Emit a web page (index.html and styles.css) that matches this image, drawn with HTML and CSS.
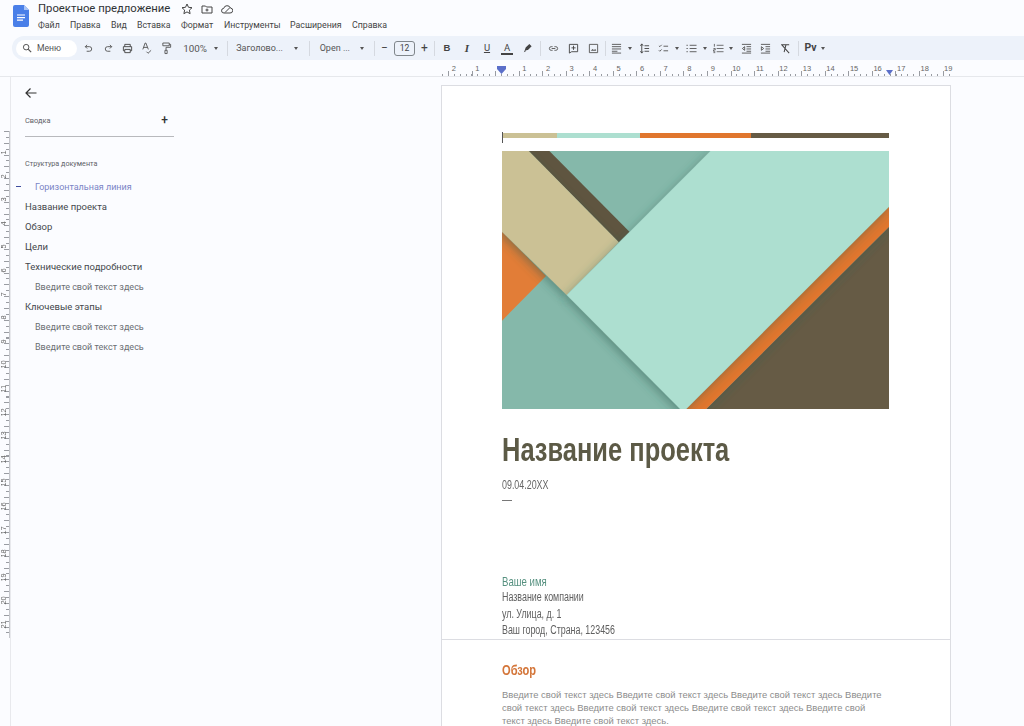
FILE: index.html
```html
<!DOCTYPE html>
<html lang="ru">
<head>
<meta charset="utf-8">
<title>Проектное предложение</title>
<link rel="stylesheet" href="styles.css">
</head>
<body>
<header class="head">
  <svg class="logo" viewBox="0 0 16 22"><path d="M2 0h9l5 5v15a2 2 0 0 1-2 2H2a2 2 0 0 1-2-2V2a2 2 0 0 1 2-2z" fill="#4a7fe8"/><path d="M11 0l5 5h-5z" fill="#a9c4f5"/><path d="M4 10h8M4 12.6h8M4 15.2h6" stroke="#fff" stroke-width="1.2"/></svg>
  <div class="head-text">
    <div class="title-row">
      <span class="doc-title">Проектное предложение</span>
      <svg class="hi" viewBox="0 0 12 12"><path d="M6 1l1.5 3.3 3.5.4-2.6 2.4.7 3.6L6 8.9l-3.1 1.8.7-3.6L1 4.7l3.5-.4z" fill="none" stroke="#444" stroke-width="1"/></svg>
      <svg class="hi" viewBox="0 0 12 12"><path d="M1 3h3.5l1 1H11v6H1z M6 5.5v3M4.5 7H7.500" fill="none" stroke="#444" stroke-width="1"/></svg>
      <svg class="hi" viewBox="0 0 12 12"><path d="M3 10a2.300 2.300 0 0 1-.3-4.600A3.500 3.500 0 0 1 9.400 5 2.500 2.500 0 0 1 9 10zM4 9.500l5-5" fill="none" stroke="#444" stroke-width="1"/></svg>
    </div>
    <nav class="menu">
      <span>Файл</span><span>Правка</span><span>Вид</span><span>Вставка</span><span>Формат</span><span>Инструменты</span><span>Расширения</span><span>Справка</span>
    </nav>
  </div>
</header>

<div class="toolbar">
  <div class="pill"><svg class="ic s11" viewBox="0 0 12 12"><circle cx="5" cy="5" r="3.300" fill="none" stroke="#555" stroke-width="1.200"/><path d="M7.500 7.500L11 11" stroke="#555" stroke-width="1.400"/></svg><span>Меню</span></div>
  <svg class="ic" viewBox="0 0 12 12"><path d="M2.500 4H7a2.500 2.500 0 0 1 0 5H4M2.500 4l2-2M2.500 4l2 2" fill="none" stroke="#555" stroke-width="1"/></svg>
  <svg class="ic" viewBox="0 0 12 12"><path d="M9.500 4H5a2.500 2.500 0 0 0 0 5h3M9.500 4l-2-2M9.500 4l-2 2" fill="none" stroke="#555" stroke-width="1"/></svg>
  <svg class="ic" viewBox="0 0 12 12"><path d="M3 4V1.500h6V4M3 8.500H1.500V4h9v4.500H9M3 7h6v3.500H3z" fill="none" stroke="#444" stroke-width="1"/></svg>
  <svg class="ic tall" viewBox="0 0 12 14"><path d="M2 8L4.500 1h.8L8 8M3 5.800h4M6 10.500l1.700 1.700L11 9" fill="none" stroke="#555" stroke-width="1"/></svg>
  <svg class="ic tall" viewBox="0 0 12 14"><path d="M2 1h7v3H2zM9 2.500h1.500v3.200H5.500V9M4.300 9h2.400v3.500H4.300z" fill="none" stroke="#555" stroke-width="1"/></svg>
  <span class="lbl big end">100%</span><i class="caret"></i><b class="sep end"></b>
  <span class="lbl end">Заголово...</span><i class="caret"></i><b class="sep"></b>
  <span class="lbl end">Open ...</span><i class="caret"></i><b class="sep"></b>
  <span class="tool-t">−</span><span class="size">12</span><span class="tool-t">+</span><b class="sep"></b>
  <span class="fmt bold">B</span><span class="fmt ital">I</span><span class="fmt und">U</span><span class="fmt col">A</span>
  <svg class="ic" viewBox="0 0 12 12"><path d="M3 8l1-3 4-4 2.500 2.500-4 4zM2 10l1-2 2 .500z" fill="#444"/></svg><b class="sep"></b>
  <svg class="ic" viewBox="0 0 12 12"><path d="M5 4H3.500a2 2 0 0 0 0 4H5M7 4h1.500a2 2 0 0 1 0 4H7M4 6h4" fill="none" stroke="#555" stroke-width="1"/></svg>
  <svg class="ic" viewBox="0 0 12 12"><path d="M1.500 1.500h9v8H4l-2.500 1.500zM6 3v4.500M3.800 5.300h4.500" fill="none" stroke="#444" stroke-width="1"/></svg>
  <svg class="ic" viewBox="0 0 12 12"><path d="M1.500 1.500h9v9h-9z" fill="none" stroke="#555" stroke-width="1"/><path d="M3 8.500l2-2 1.500 1.200L8 6.500l1 2z" fill="#555"/></svg><b class="sep"></b>
  <svg class="ic" viewBox="0 0 12 12"><path d="M1 1.500h10M1 4h10M1 6.500h10M1 9h6M1 11h10" stroke="#555" stroke-width="1"/></svg><i class="caret"></i>
  <svg class="ic" viewBox="0 0 12 12"><path d="M3 1v10M1.500 3L3 1l1.500 2M1.500 9L3 11l1.500-2M6 3h5M6 6h5M6 9h5" fill="none" stroke="#444" stroke-width="1"/></svg>
  <svg class="ic" viewBox="0 0 12 12"><path d="M1 3l1 1 2-2M1 8l1 1 2-2M6 3.500h5M6 8.500h5" fill="none" stroke="#555" stroke-width="1"/></svg><i class="caret"></i>
  <svg class="ic" viewBox="0 0 12 12"><path d="M4 2.500h7.500M4 6h7.500M4 9.500h7.500M.5 2.500h1.500M.5 6h1.500M.5 9.500h1.500" stroke="#555" stroke-width="1"/></svg><i class="caret"></i>
  <svg class="ic" viewBox="0 0 12 12"><path d="M4 2.500h7.500M4 6h7.500M4 9.500h7.500M1.500 1v3M.5 6h2v1.500h-2v1.500h2M.5 10.500h2" stroke="#555" stroke-width=".9" fill="none"/></svg><i class="caret"></i>
  <svg class="ic" viewBox="0 0 12 12"><path d="M1 1.500h10M6 4h5M6 6.500h5M6 9h5M1 11h10M4 4L1.500 6 4 8z" fill="none" stroke="#555" stroke-width="1"/></svg>
  <svg class="ic" viewBox="0 0 12 12"><path d="M1 1.500h10M6 4h5M6 6.500h5M6 9h5M1 11h10M1.500 4L4 6 1.500 8z" fill="none" stroke="#555" stroke-width="1"/></svg>
  <svg class="ic" viewBox="0 0 12 12"><path d="M2 2h8M6.500 2L4.500 10M1.500 1.500l8.500 9.500" fill="none" stroke="#444" stroke-width="1.100"/></svg><b class="sep"></b>
  <span class="fmt pv">Рv</span><i class="caret"></i>
</div>

<div class="hruler">
  <div class="hscale">
    <span>2</span><span>1</span><span></span><span>1</span><span>2</span><span>3</span><span>4</span><span>5</span><span>6</span><span>7</span><span>8</span><span>9</span><span>10</span><span>11</span><span>12</span><span>13</span><span>14</span><span>15</span><span>16</span><span>17</span><span>18</span><span>19</span>
    <svg class="tab tab-l" viewBox="0 0 9 8"><path d="M0 0h9v3L4.500 8 0 3z" fill="#5b6fc9"/></svg>
    <svg class="tab tab-r" viewBox="0 0 7 5"><path d="M0 0h7L3.500 5z" fill="#5b6fc9"/></svg>
  </div>
</div>

<main class="main">
  <div class="vruler">
    <div class="vscale">
      <span>1</span><span>2</span><span>3</span><span>4</span><span>5</span><span>6</span><span>7</span><span>8</span><span>9</span><span>10</span><span>11</span><span>12</span><span>13</span><span>14</span><span>15</span><span>16</span><span>17</span><span>18</span><span>19</span><span>20</span><span>21</span>
    </div>
  </div>

  <aside class="side">
    <svg class="back" viewBox="0 0 12 12"><path d="M11.500 6H1M5.500 1.500L1 6l4.500 4.500" fill="none" stroke="#333" stroke-width="1.200"/></svg>
    <div class="sum"><span>Сводка</span><em>+</em></div>
    <div class="struct">Структура документа</div>
    <ul class="outline">
      <li class="sub cur">Горизонтальная линия</li>
      <li>Название проекта</li>
      <li>Обзор</li>
      <li>Цели</li>
      <li>Технические подробности</li>
      <li class="sub">Введите свой текст здесь</li>
      <li>Ключевые этапы</li>
      <li class="sub">Введите свой текст здесь</li>
      <li class="sub">Введите свой текст здесь</li>
    </ul>
  </aside>

  <div class="doc">
    <section class="page first">
      <div class="bar"><i class="b1"></i><i class="b2"></i><i class="b3"></i><i class="b4"></i></div>
      <svg class="hero" viewBox="38 93 1160 774" preserveAspectRatio="none">
        <defs><filter id="sh" x="-20%" y="-20%" width="140%" height="140%"><feDropShadow dx="-6" dy="10" stdDeviation="14" flood-color="#2d5a50" flood-opacity=".45"/></filter></defs>
        <rect x="38" y="93" width="1160" height="774" fill="#85b8aa"/>
        <path d="M38 335L170 468 38 602z" fill="#e27d37"/>
        <path d="M118 93h62l240 242-32 32z" fill="#5f5540"/>
        <path d="M38 93h80l270 274-156 158L38 335z" fill="#cbc195" filter="url(#sh)"/>
        <path d="M1198 320V867H650z" fill="#665b45"/>
        <path d="M1198 260v60L650 867h-60z" fill="#e0762e" filter="url(#sh)"/>
        <path d="M663 93h535v167L590 867h-18L232 525z" fill="#addfd0" filter="url(#sh)"/>
      </svg>
      <h1 class="narrow wide">Название проекта</h1>
      <p class="date narrow">09.04.20XX</p>
      <div class="dash"></div>
      <p class="name narrow">Ваше имя</p>
      <p class="addr narrow">Название компании</p>
      <p class="addr narrow">ул. Улица, д. 1</p>
      <p class="addr narrow">Ваш город, Страна, 123456</p>
    </section>
    <section class="page second">
      <h2 class="narrow">Обзор</h2>
      <p class="body">Введите свой текст здесь Введите свой текст здесь Введите свой текст здесь Введите<br>свой текст здесь Введите свой текст здесь Введите свой текст здесь Введите свой<br>текст здесь Введите свой текст здесь.</p>
    </section>
  </div>
</main>
</body>
</html>
```

FILE: styles.css
```css
* { box-sizing: border-box; }
html, body { margin: 0; height: 726px; overflow: hidden; }
body { background: #fbfcff; font-family: Roboto, "Liberation Sans", sans-serif; color: #3c4043; }

.head { display: flex; height: 36px; padding: 4px 0 0 13px; gap: 9px; background: #fbfcff; }
.logo { width: 16px; height: 22px; margin-top: 1px; }
.head-text { display: flex; flex-direction: column; }
.title-row { display: flex; align-items: center; height: 10px; }
.doc-title { font-size: 11.300px; line-height: 10px; width: 143px; color: #303336; }
.hi { width: 12px; height: 12px; margin-right: 8px; }
.menu { display: flex; margin-top: 5px; font-size: 8.800px; line-height: 12px; color: #444; }
.menu span:nth-child(1) { width: 32px; }
.menu span:nth-child(2) { width: 41px; }
.menu span:nth-child(3) { width: 26px; }
.menu span:nth-child(4) { width: 44px; }
.menu span:nth-child(5) { width: 43px; }
.menu span:nth-child(6) { width: 66px; }
.menu span:nth-child(7) { width: 62px; }

.toolbar {
  display: grid; align-items: center; justify-items: center;
  grid-template-columns: 62px 20px 20px 19px 19px 20px 31px 18px 3px 55px 26px 1px 40px 24px 1px 19px 21px 19px 1px 24px 16px 24px 16px 25px 1px 24px 16px 24px 1px 20px 8px 20px 19px 8px 21px 6px 20px 6px 24px 14px 26px 1px 20px 8px;
  height: 24px; margin-left: 12px; padding-left: 4px;
  background: #edf2fa; border-radius: 12px 0 0 12px;
  font-size: 9px; color: #444;
}
.pill {
  justify-self: start; display: flex; align-items: center; gap: 5px;
  width: 61px; height: 17px; padding-left: 6px;
  background: #fff; border-radius: 9px; font-size: 8.600px; color: #555;
}
.ic { width: 11px; height: 11px; display: block; }
.tall { height: 13px; }
.s11 { width: 10px; height: 10px; }
.lbl { white-space: nowrap; font-size: 9px; color: #555; }
.big { font-size: 9.800px; }
.end { justify-self: end; }
.caret { width: 0; height: 0; border-left: 2.500px solid transparent; border-right: 2.500px solid transparent; border-top: 3px solid #555; }
.sep { width: 1px; height: 15px; background: #d5d9e0; }
.tool-t { font-size: 12px; color: #444; line-height: 12px; }
.size { width: 21px; height: 15px; border: 1px solid #80868b; border-radius: 3px; text-align: center; font-size: 8.600px; line-height: 13px; }
.fmt { font-size: 9.500px; color: #444; line-height: 12px; }
.bold { font-weight: 700; font-family: "Liberation Sans", sans-serif; }
.ital { font-style: italic; font-family: "Liberation Serif", serif; font-weight: 700; font-size: 11px; }
.und { text-decoration: underline; }
.col { border-bottom: 2px solid #444; padding: 0 3px; line-height: 11px; }
.pv { font-weight: 700; font-size: 10.500px; padding-left: 3px; }

.hruler { height: 16px; background: #fbfcff; padding-left: 442px; }
.hscale {
  position: relative; display: flex; height: 16px; width: 508px; padding-top: 4px;
  background:
    repeating-linear-gradient(90deg, #999ca2 0 1px, transparent 1px 23.550px) 6px bottom / 100% 5px no-repeat,
    repeating-linear-gradient(90deg, #999ca2 0 1px, transparent 1px 5.890px) left bottom / 100% 2px no-repeat;
  font-family: "Liberation Sans", sans-serif; font-size: 7.500px; line-height: 10px; color: #666;
}
.hscale span { width: 23.550px; flex: none; text-align: center; height: 10px; }
.tab { position: absolute; }
.tab-l { left: 55px; top: 6px; width: 9px; height: 8px; }
.tab-r { left: 444px; top: 10px; width: 7px; height: 5px; }

.main { display: flex; height: 650px; border-top: 1px solid #e6e8ec; }
.vruler { width: 11px; height: 649px; padding-top: 54px; border-right: 1px solid #e8e9ed; flex: none; }
.vscale {
  display: flex; flex-direction: column; height: 507px; padding-top: 10px;
  border-right: 1px solid #c5c7cc;
  background:
    repeating-linear-gradient(180deg, #999ca2 0 1px, transparent 1px 11.800px) right top / 5px 100% no-repeat,
    repeating-linear-gradient(180deg, #999ca2 0 1px, transparent 1px 5.900px) right top / 3px 100% no-repeat;
}
.vscale span {
  height: 23.600px; flex: none; text-align: center;
  writing-mode: vertical-rl; transform: rotate(180deg);
  font-family: "Liberation Sans", sans-serif; font-size: 7.500px; line-height: 7px; color: #666;
  width: 7px;
}

.side { width: 430px; flex: none; padding: 10px 0 0 14px; }
.back { display: block; width: 12px; height: 12px; }
.sum { display: flex; justify-content: space-between; align-items: center; width: 149px; height: 24px; margin-top: 14px; padding: 0 6px 9px 0; border-bottom: 1px solid #b8b9bd; font-size: 7.400px; color: #5f6368; }
.sum em { font-style: normal; font-size: 12px; color: #333; font-weight: 500; }
.struct { margin-top: 22px; font-size: 7.200px; line-height: 10px; color: #5f6368; }
.outline { list-style: none; margin: 8px 0 0; padding: 0; font-size: 9.500px; color: #44484c; }
.outline li { height: 19.950px; line-height: 20px; }
.outline .sub { padding-left: 10px; font-size: 9px; color: #6a6e73; }
.outline .cur { position: relative; color: #7a84c6; }
.outline .cur::before { content: ""; position: absolute; left: -9px; top: 9px; width: 5px; height: 1px; background: #3f4d9e; }

.doc { flex: none; width: 510px; padding-top: 8px; }
.page { background: #fff; border: 1px solid #dcdde2; padding-left: 60px; font-family: "Liberation Sans", sans-serif; }
.first { height: 555px; padding-top: 47px; }
.second { height: 86px; border-top: 0; border-bottom: 0; padding-top: 20px; overflow: hidden; }
.narrow { transform: scaleX(.74); transform-origin: left center; white-space: nowrap; }
.wide { transform: scaleX(.76); }
.bar { display: flex; height: 5px; width: 387px; position: relative; }
.bar::before { content: ""; position: absolute; left: 0; top: -1px; width: 1px; height: 11px; background: #555; }
.bar i { display: block; height: 5px; }
.b1 { width: 55px; background: #cbc195; }
.b2 { width: 83px; background: #addfd0; }
.b3 { width: 111px; background: #e0762e; }
.b4 { width: 138px; background: #665b45; }
.hero { display: block; width: 387px; height: 258px; margin-top: 13px; }
h1 { margin: 21px 0 0; font-size: 33.500px; line-height: 40px; font-weight: 700; color: #5c5a46; }
.date { margin: 8px 0 0; font-size: 12px; line-height: 14px; color: #666; }
.dash { width: 10px; height: 1px; margin-top: 8px; background: #777; }
.name { margin: 73px 0 0; font-size: 13px; line-height: 15px; color: #55907f; }
.addr { margin: 0; font-size: 12px; line-height: 16.500px; color: #606060; }
h2 { margin: 0; font-size: 15px; line-height: 20px; font-weight: 700; color: #d4763a; }
.body { margin: 8px 0 0; font-size: 9.450px; line-height: 13.200px; color: #8c8c8c; }
```
